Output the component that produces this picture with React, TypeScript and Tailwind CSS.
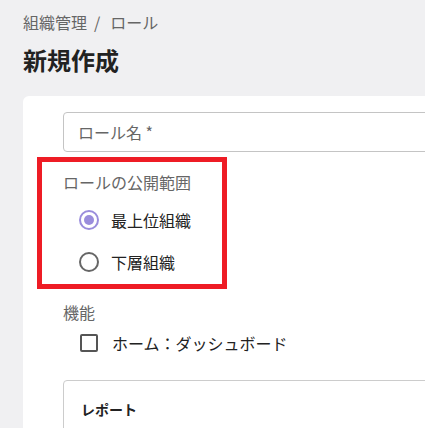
import React from "react";

const RadioIcon = ({ checked }: { checked?: boolean }) => (
  <svg width="24" height="24" viewBox="0 0 24 24">
    <circle
      cx="12"
      cy="12"
      r="9"
      fill="none"
      stroke={checked ? "#9a8ddc" : "#666666"}
      strokeWidth="2"
    />
    {checked && <circle cx="12" cy="12" r="5" fill="#9a8ddc" />}
  </svg>
);

const RadioRow = ({ label, checked }: { label: string; checked?: boolean }) => (
  <div className="flex h-[42px] items-center">
    <div className="ml-[14px] flex h-[24px] w-[24px] items-center justify-center">
      <RadioIcon checked={checked} />
    </div>
    <span className="ml-[10px] text-[16px] leading-[24px] text-[#222]">{label}</span>
  </div>
);

export default function App() {
  return (
    <div className="h-[428px] w-[425px] overflow-hidden bg-[#f0f0f2] font-['Noto_Sans_CJK_JP','Noto_Sans',sans-serif]">
      <div className="pl-[23px] pt-[10px]">
        <div className="flex text-[16px] leading-[24px] text-[#666]">
          <span>組織管理</span>
          <span className="ml-[7px] mr-[10px]">/</span>
          <span>ロール</span>
        </div>
        <h1 className="mt-[8px] text-[24px] font-bold leading-[36px] text-[#222]">新規作成</h1>

        <div className="mt-[18px] w-[520px] rounded-[6px] bg-white pb-[40px] pl-[40px] pt-[16px]">
          <div className="flex h-[40px] items-center rounded-[4px] border border-[#c4c4c4] pl-[14px] text-[16px] text-[#666]">
            ロール名 *
          </div>

          <div className="relative mt-[18px]">
            <div className="pointer-events-none absolute left-[-26px] top-[-13px] h-[132px] w-[190px] border-[5px] border-[#ee1c25]" />
            <div className="text-[16px] leading-[24px] text-[#666]">ロールの公開範囲</div>
            <div className="mt-[5px]">
              <RadioRow label="最上位組織" checked />
              <RadioRow label="下層組織" />
            </div>
          </div>

          <div className="mt-[17px] text-[16px] leading-[24px] text-[#666]">機能</div>
          <div className="flex h-[38px] items-center">
            <div className="ml-[17px] h-[18px] w-[18px] rounded-[2px] border-2 border-[#555]" />
            <span className="ml-[14px] text-[16px] leading-[24px] text-[#222]">ホーム：ダッシュボード</span>
          </div>

          <div className="mt-[18px] rounded-[4px] border border-[#cccccc] pb-[40px] pl-[17px] pt-[18px]">
            <div className="text-[14px] font-bold leading-[20px] text-[#222]">レポート</div>
          </div>
        </div>
      </div>
    </div>
  );
}
